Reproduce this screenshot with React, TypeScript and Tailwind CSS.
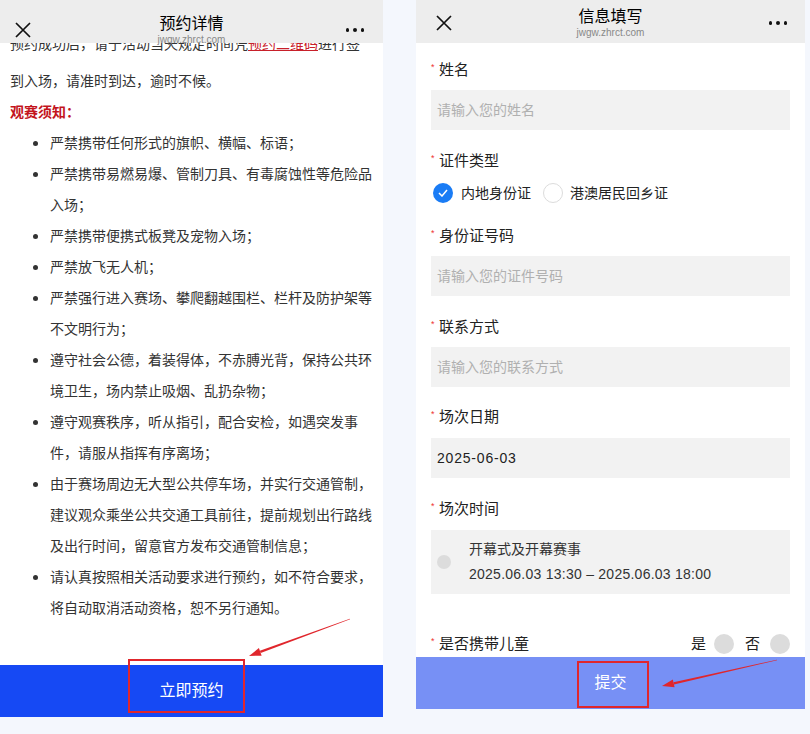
const font = "font-['Liberation_Sans','Noto_Sans_CJK_SC',sans-serif]";

const rules: string[][] = [
  ["严禁携带任何形式的旗帜、横幅、标语；"],
  ["严禁携带易燃易爆、管制刀具、有毒腐蚀性等危险品", "入场；"],
  ["严禁携带便携式板凳及宠物入场；"],
  ["严禁放飞无人机；"],
  ["严禁强行进入赛场、攀爬翻越围栏、栏杆及防护架等", "不文明行为；"],
  ["遵守社会公德，着装得体，不赤膊光背，保持公共环", "境卫生，场内禁止吸烟、乱扔杂物；"],
  ["遵守观赛秩序，听从指引，配合安检，如遇突发事", "件，请服从指挥有序离场；"],
  [
    "由于赛场周边无大型公共停车场，并实行交通管制，",
    "建议观众乘坐公共交通工具前往，提前规划出行路线",
    "及出行时间，留意官方发布交通管制信息；",
  ],
  ["请认真按照相关活动要求进行预约，如不符合要求，", "将自动取消活动资格，恕不另行通知。"],
];

function CloseIcon() {
  return (
    <svg width="16" height="16" viewBox="0 0 16 16" fill="none">
      <path d="M1 1L15 15M15 1L1 15" stroke="#111" strokeWidth="1.7" />
    </svg>
  );
}

function Dots() {
  return (
    <div className="flex gap-[4px]">
      <span className="w-[3.5px] h-[3.5px] rounded-full bg-[#111]" />
      <span className="w-[3.5px] h-[3.5px] rounded-full bg-[#111]" />
      <span className="w-[3.5px] h-[3.5px] rounded-full bg-[#111]" />
    </div>
  );
}

function Header({ title, low }: { title: string; low?: boolean }) {
  return (
    <div className="h-[43px] shrink-0 bg-[#ededed] flex relative z-10">
      <div className={`w-[60px] flex ${low ? "pl-[15px] pt-[22px]" : "pl-[20px] pt-[15px]"}`}>
        <CloseIcon />
      </div>
      <div className={`flex-1 flex flex-col items-center ${low ? "pt-[14px]" : "pt-[7px]"}`}>
        <div className="text-[16px] leading-[20px] text-[#000]">{title}</div>
        <div className="text-[10px] leading-[12px] text-[#888]">jwgw.zhrct.com</div>
      </div>
      <div className={`w-[60px] flex justify-end ${low ? "pr-[19px] pt-[28px]" : "pr-[18px] pt-[21px]"}`}>
        <Dots />
      </div>
    </div>
  );
}

function Label({ text }: { text: string }) {
  return (
    <div className="h-[24px] leading-[24px] text-[15px] text-[#222] flex items-center">
      <span className="text-[9px] text-[#e33] mr-[1px] -mt-[6px] w-[7px]">*</span>
      {text}
    </div>
  );
}

function Input({ text, filled }: { text: string; filled?: boolean }) {
  return (
    <div
      className={`h-[40px] bg-[#f2f2f2] px-[6px] flex items-center text-[14px] ${
        filled ? "text-[#222] tracking-[0.8px]" : "text-[#b0b0b0]"
      }`}
    >
      {text}
    </div>
  );
}

function arrow(x1: number, y1: number, x2: number, y2: number) {
  const dx = x2 - x1;
  const dy = y2 - y1;
  const len = Math.hypot(dx, dy);
  const ux = dx / len;
  const uy = dy / len;
  const nx = -uy;
  const ny = ux;
  const hx = x2 - ux * 12;
  const hy = y2 - uy * 12;
  const shaft = [
    [x1 + nx * 0.3, y1 + ny * 0.3],
    [hx + nx * 1.2, hy + ny * 1.2],
    [hx - nx * 1.2, hy - ny * 1.2],
    [x1 - nx * 0.3, y1 - ny * 0.3],
  ];
  const head = [
    [x2, y2],
    [hx + nx * 4, hy + ny * 4],
    [hx - nx * 4, hy - ny * 4],
  ];
  const fmt = (p: number[][]) => p.map((q) => q.join(",")).join(" ");
  return (
    <g fill="#e0262c">
      <polygon points={fmt(shaft)} />
      <polygon points={fmt(head)} />
    </g>
  );
}

export default function App() {
  return (
    <div className={`relative w-[810px] h-[734px] bg-[#f4f7fd] flex gap-[33px] items-start ${font}`}>
      {/* left phone */}
      <div className="w-[383px] h-[717px] bg-white flex flex-col">
        <Header title="预约详情" low />
        <div className="flex-1 overflow-hidden">
          <div className="px-[10px] text-[14px] leading-[31px] text-[#333]">
            <div className="whitespace-nowrap -mt-[14px] mb-[6px]">
              预约成功后，请于活动当天规定时间凭
              <span className="text-[#c8202a] underline">预约二维码</span>
              进行签
            </div>
            <div className="whitespace-nowrap">到入场，请准时到达，逾时不候。</div>
            <div className="font-bold text-[#c3141c]">观赛须知：</div>
            <ul>
              {rules.map((lines, i) => (
                <li key={i} className="flex">
                  <div className="w-[40px] shrink-0 flex justify-start pl-[23px] pt-[13px]">
                    <span className="w-[5px] h-[5px] rounded-full bg-[#333]" />
                  </div>
                  <div>
                    {lines.map((l) => (
                      <div key={l} className="whitespace-nowrap">
                        {l}
                      </div>
                    ))}
                  </div>
                </li>
              ))}
            </ul>
          </div>
        </div>
        <div className="h-[52px] shrink-0 bg-[#1649f4] flex items-center justify-center text-white text-[16px]">
          立即预约
        </div>
      </div>

      {/* right phone */}
      <div className="w-[389px] h-[709px] bg-white flex flex-col">
        <Header title="信息填写" />
        <div className="flex-1 overflow-hidden px-[15px] pt-[15px]">
          <Label text="姓名" />
          <div className="mt-[8px]">
            <Input text="请输入您的姓名" />
          </div>

          <div className="mt-[19px]">
            <Label text="证件类型" />
          </div>
          <div className="mt-[10px] h-[20px] flex items-center text-[14px] text-[#222]">
            <span className="ml-[2px] w-[20px] h-[20px] rounded-full bg-[#1a7cf5] flex items-center justify-center">
              <svg width="10" height="8" viewBox="0 0 10 8" fill="none">
                <path d="M1 4L4 7L9 1" stroke="#fff" strokeWidth="1.5" />
              </svg>
            </span>
            <span className="ml-[8px]">内地身份证</span>
            <span className="ml-[12px] w-[20px] h-[20px] rounded-full border border-[#dcdcdc]" />
            <span className="ml-[7px]">港澳居民回乡证</span>
          </div>

          <div className="mt-[21px]">
            <Label text="身份证号码" />
          </div>
          <div className="mt-[8px]">
            <Input text="请输入您的证件号码" />
          </div>

          <div className="mt-[19px]">
            <Label text="联系方式" />
          </div>
          <div className="mt-[8px]">
            <Input text="请输入您的联系方式" />
          </div>

          <div className="mt-[18px]">
            <Label text="场次日期" />
          </div>
          <div className="mt-[9px]">
            <Input text="2025-06-03" filled />
          </div>

          <div className="mt-[19px]">
            <Label text="场次时间" />
          </div>
          <div className="mt-[9px] h-[64px] bg-[#f2f2f2] pl-[6px] flex items-center">
            <span className="w-[14px] h-[14px] rounded-full bg-[#dcdcdc]" />
            <div className="ml-[18px] text-[14px] leading-[25px] text-[#333]">
              <div>开幕式及开幕赛事</div>
              <div className="tracking-[0.25px]">2025.06.03 13:30 – 2025.06.03 18:00</div>
            </div>
          </div>

          <div className="mt-[38px] flex items-center justify-between">
            <Label text="是否携带儿童" />
            <div className="flex items-center text-[15px] text-[#222]">
              <span>是</span>
              <span className="ml-[8px] w-[20px] h-[20px] rounded-full bg-[#dcdcdc]" />
              <span className="ml-[11px]">否</span>
              <span className="ml-[10px] w-[20px] h-[20px] rounded-full bg-[#dcdcdc]" />
            </div>
          </div>
        </div>
        <div className="h-[52px] shrink-0 bg-[#7790f5] flex items-center justify-center text-white text-[16px]">
          提交
        </div>
      </div>

      {/* annotations */}
      <div className="absolute left-[128px] top-[659px] w-[117px] h-[54px] border-2 border-[#e0262c]" />
      <div className="absolute left-[577px] top-[661px] w-[72px] h-[47px] border-2 border-[#e0262c]" />
      <svg className="absolute inset-0 pointer-events-none" width="810" height="734">
        {arrow(350, 619, 249, 656)}
        {arrow(777, 660, 662, 686)}
      </svg>
    </div>
  );
}
